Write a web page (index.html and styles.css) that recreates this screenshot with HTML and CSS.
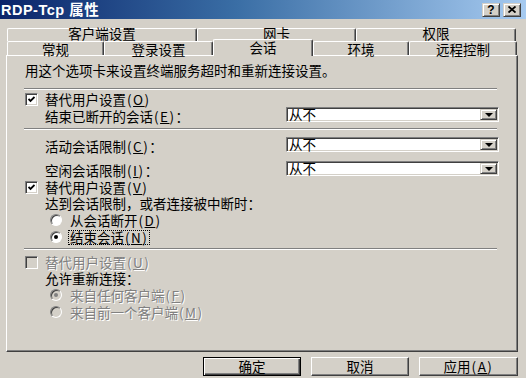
FILE: index.html
```html
<!DOCTYPE html>
<html lang="zh-CN">
  <head>
    <meta charset="UTF-8" />
    <meta name="viewport" content="width=device-width, initial-scale=1.0" />
    <title>RDP-Tcp 属性</title>
    <link rel="stylesheet" href="styles.css">
  </head>
  <body>
    <div class="dialog">
      <div class="titlebar">
        <span class="title">RDP-Tcp 属性</span>
        <div class="title-buttons">
          <span class="tbtn help">?</span>
          <span class="tbtn">
            <svg width="8" height="7" viewBox="0 0 8 7">
              <path d="M0.5 0.5 L7.5 6.5 M7.5 0.5 L0.5 6.5" stroke="#000" stroke-width="1.8" />
            </svg>
          </span>
        </div>
      </div>

      <div class="tabs">
        <div class="tab-row back">
          <div class="tab tab-client">客户端设置</div>
          <div class="tab tab-nic">网卡</div>
          <div class="tab tab-perm">权限</div>
        </div>
        <div class="tab-row front">
          <div class="tab tab-general">常规</div>
          <div class="tab tab-logon">登录设置</div>
          <div class="tab tab-session active">会话</div>
          <div class="tab tab-env">环境</div>
          <div class="tab tab-remote">远程控制</div>
        </div>
      </div>

      <div class="panel">
        <p class="intro">用这个选项卡来设置终端服务超时和重新连接设置。</p>
        <div class="sep sep-1"></div>

        <div class="row row-o">
          <span class="check checked">
            <svg width="7" height="7" viewBox="0 0 7 7">
              <path d="M0.5 3 L2.5 5 L6.5 1" fill="none" stroke="#000" stroke-width="1.8" />
            </svg>
          </span>
          <span>替代用户设置<span class="key">(<u>O</u>)</span></span>
        </div>
        <div class="row field-row">
          <span class="label">结束已断开的会话<span class="key">(<u>E</u>)</span>：</span>
          <div class="combo"><span class="combo-text">从不</span><span class="combo-btn"></span></div>
        </div>

        <div class="sep sep-2"></div>

        <div class="row field-row field-c">
          <span class="label">活动会话限制<span class="key">(<u>C</u>)</span>：</span>
          <div class="combo"><span class="combo-text">从不</span><span class="combo-btn"></span></div>
        </div>
        <div class="row field-row field-i">
          <span class="label">空闲会话限制<span class="key">(<u>I</u>)</span>：</span>
          <div class="combo"><span class="combo-text">从不</span><span class="combo-btn"></span></div>
        </div>

        <div class="row row-v">
          <span class="check checked">
            <svg width="7" height="7" viewBox="0 0 7 7">
              <path d="M0.5 3 L2.5 5 L6.5 1" fill="none" stroke="#000" stroke-width="1.8" />
            </svg>
          </span>
          <span>替代用户设置<span class="key">(<u>V</u>)</span></span>
        </div>
        <div class="row indent">达到会话限制，或者连接被中断时：</div>
        <div class="row radio-row">
          <span class="radio"></span>
          <span>从会话断开<span class="key">(<u>D</u>)</span></span>
        </div>
        <div class="row radio-row">
          <span class="radio selected"></span>
          <span class="focus">结束会话<span class="key">(<u>N</u>)</span></span>
        </div>

        <div class="sep sep-3"></div>

        <div class="row row-u disabled">
          <span class="check off"></span>
          <span>替代用户设置<span class="key">(<u>U</u>)</span></span>
        </div>
        <div class="row indent">允许重新连接：</div>
        <div class="row radio-row disabled">
          <span class="radio off selected"></span>
          <span>来自任何客户端<span class="key">(<u>F</u>)</span></span>
        </div>
        <div class="row radio-row disabled">
          <span class="radio off"></span>
          <span>来自前一个客户端<span class="key">(<u>M</u>)</span></span>
        </div>
      </div>

      <div class="buttons">
        <button class="btn default">确定</button>
        <button class="btn">取消</button>
        <button class="btn">应用<span class="key">(<u>A</u>)</span></button>
      </div>
    </div>
  </body>
</html>
```

FILE: styles.css
```css
* {
  margin: 0;
  padding: 0;
  box-sizing: border-box;
}

body {
  width: 526px;
  height: 378px;
  overflow: hidden;
  background-color: #d4d0c8;
  color: #000;
  font-family: "Noto Sans CJK SC", sans-serif;
  font-size: 13.5px;
  line-height: 16px;
}

/* title bar */

.titlebar {
  height: 19px;
  background: linear-gradient(to right, #0a246a 0%, #3a6ea5 45%, #a6caf0 100%);
  display: flex;
  align-items: center;
  justify-content: space-between;
  padding-right: 5px;
}

.title {
  color: #fff;
  font-family: "Liberation Sans", "Noto Sans CJK SC", sans-serif;
  font-weight: bold;
  font-size: 14.5px;
  letter-spacing: 0.5px;
  padding-left: 1px;
}

.title-buttons {
  display: flex;
  gap: 3px;
}

.tbtn {
  width: 18px;
  height: 14px;
  display: flex;
  align-items: center;
  justify-content: center;
  background-color: #d4d0c8;
  border: 1px solid;
  border-color: #d4d0c8 #404040 #404040 #d4d0c8;
  box-shadow: inset 1px 1px #fff, inset -1px -1px #808080;
}

.help {
  font-family: "Liberation Sans", sans-serif;
  font-weight: bold;
  font-size: 12px;
  line-height: 12px;
}

/* tabs */

.tabs {
  padding-top: 9px;
  padding-left: 7px;
}

.tab-row {
  display: flex;
}

.back {
  height: 13px;
}

.front {
  height: 14px;
}

.tab {
  background-color: #d4d0c8;
  border-top: 1px solid #fff;
  border-left: 1px solid #fff;
  border-right: 1px solid #404040;
  box-shadow: inset -1px 0 #808080;
  border-radius: 2px 2px 0 0;
  text-align: center;
  white-space: nowrap;
}

.back .tab {
  line-height: 8px;
}

.front .tab {
  line-height: 14px;
}

.tab-client { width: 190px; }
.tab-nic { width: 159px; }
.tab-perm { width: 160px; }
.tab-general { width: 97px; }
.tab-logon { width: 109px; }
.tab-session { width: 100px; }
.tab-env { width: 96px; }
.tab-remote { width: 108px; }

.tab.active {
  position: relative;
  z-index: 1;
  margin-top: -2px;
  height: 17px;
  line-height: 15px;
}

/* panel */

.panel {
  margin-left: 6px;
  width: 512px;
  height: 297px;
  border-top: 1px solid #fff;
  border-left: 1px solid #fff;
  border-right: 1px solid #404040;
  border-bottom: 1px solid #404040;
  box-shadow: inset -1px -1px #808080;
  padding: 6px 18px 0 18px;
}

.intro {
  height: 16px;
  white-space: nowrap;
}

.sep {
  height: 2px;
  width: 473px;
  margin-left: -1px;
  border-top: 1px solid #808080;
  border-bottom: 1px solid #fff;
}

.sep-1 { margin-top: 10px; }
.sep-2 { margin-top: 6px; }
.sep-3 { margin-top: 3px; }

.row {
  height: 16px;
  display: flex;
  align-items: center;
  white-space: nowrap;
}

.row-o { margin-top: 1px; }
.row-v { margin-top: 3px; }
.row-u { margin-top: 4px; }

.indent {
  padding-left: 20px;
}

.key {
  letter-spacing: 1.5px;
  margin-left: 1px;
}

.field-row {
  height: 15px;
}

.field-row .label {
  padding-left: 20px;
  margin-top: 3px;
}

.field-c { margin-top: 7px; }
.field-i { margin-top: 9px; }

.field-c .label,
.field-i .label {
  margin-top: 2px;
}

.combo {
  margin-left: auto;
  width: 213px;
  height: 15px;
  display: flex;
  align-items: center;
  padding: 1px;
  background-color: #fff;
  border: 1px solid;
  border-color: #808080 #fff #fff #808080;
  box-shadow: inset 1px 1px #404040, inset -1px -1px #d4d0c8;
}

.combo-text {
  flex: 1;
  padding-left: 1px;
  line-height: 11px;
}

.combo-btn {
  width: 17px;
  height: 11px;
  display: flex;
  align-items: center;
  justify-content: center;
  background-color: #d4d0c8;
  border: 1px solid;
  border-color: #d4d0c8 #404040 #404040 #d4d0c8;
  box-shadow: inset 1px 1px #fff, inset -1px -1px #808080;
}

.combo-btn::after {
  content: "";
  border-left: 4px solid transparent;
  border-right: 4px solid transparent;
  border-top: 4px solid #000;
}

/* checkbox and radio */

.check {
  width: 13px;
  height: 13px;
  margin-right: 7px;
  display: flex;
  align-items: center;
  justify-content: center;
  background-color: #fff;
  border: 1px solid;
  border-color: #808080 #fff #fff #808080;
  box-shadow: inset 1px 1px #404040, inset -1px -1px #d4d0c8;
}

.check.off {
  background-color: #d4d0c8;
}

.radio-row {
  padding-left: 25px;
  margin-top: 1px;
}

.radio {
  width: 12px;
  height: 12px;
  margin-right: 8px;
  border-radius: 50%;
  display: flex;
  align-items: center;
  justify-content: center;
  background-color: #fff;
  border: 1px solid;
  border-color: #808080 #fff #fff #808080;
  box-shadow: inset 1px 1px #404040;
}

.radio.selected::after {
  content: "";
  width: 4px;
  height: 4px;
  border-radius: 50%;
  background-color: #000;
}

.radio.off {
  background-color: #d4d0c8;
}

.radio.off.selected::after {
  background-color: #808080;
}

.focus {
  border: 1px dotted #000;
  padding: 0 1px;
  margin-left: -2px;
  line-height: 13px;
}

.disabled {
  color: #808080;
  text-shadow: 1px 1px #fff;
}

/* buttons */

.buttons {
  display: flex;
  justify-content: flex-end;
  gap: 10px;
  padding-right: 8px;
  margin-top: 5px;
}

.btn {
  width: 98px;
  height: 19px;
  font-family: "Noto Sans CJK SC", sans-serif;
  font-size: 13.5px;
  line-height: 15px;
  color: #000;
  background-color: #d4d0c8;
  border: 1px solid;
  border-color: #fff #404040 #404040 #fff;
  box-shadow: inset -1px -1px #808080;
}

.btn:last-child {
  width: 99px;
}

.btn.default {
  border: 1px solid #000;
  box-shadow: inset 1px 1px #fff, inset -1px -1px #404040, inset -2px -2px #808080;
}
```
